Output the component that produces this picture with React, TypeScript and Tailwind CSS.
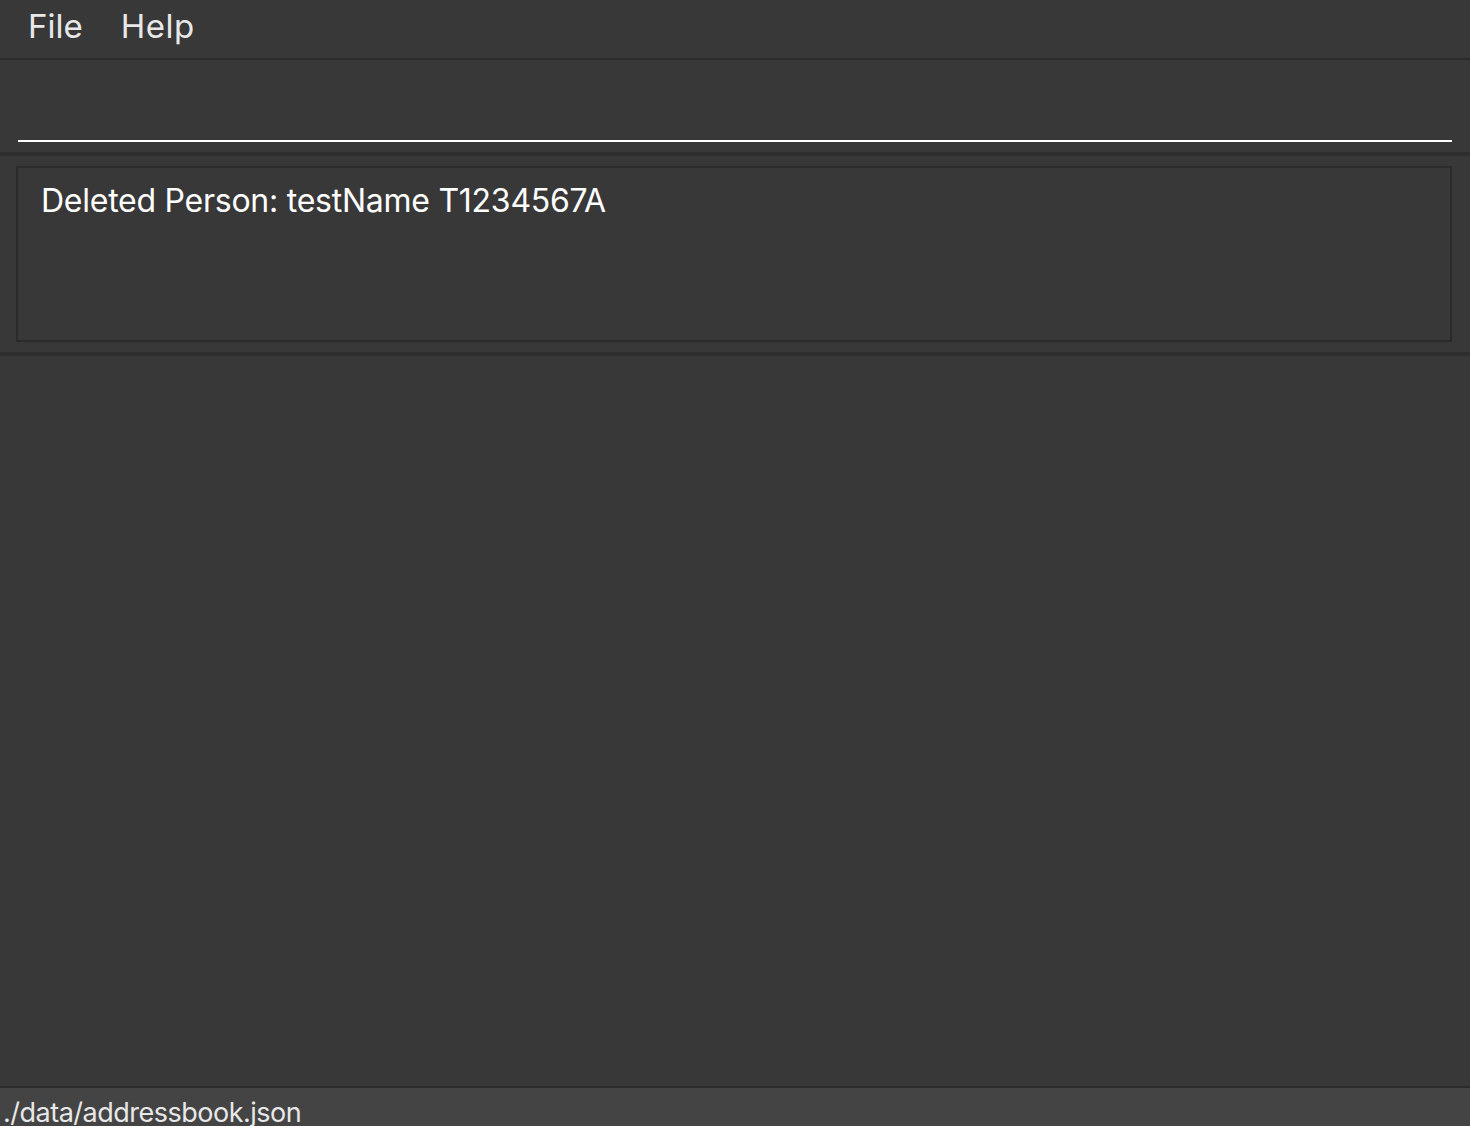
export default function App() {
    return (
        <div className="flex h-screen w-full flex-col overflow-hidden bg-[#383838] text-white" style={{ fontFamily: 'Inter, "Noto Sans", sans-serif' }}>
            {/* Menu bar */}
            <div className="flex h-[60px] shrink-0 items-center gap-[38px] border-b-2 border-[#2c2c2c] pl-[28px] text-[33px] leading-none text-[#e8e8e8]">
                <span className="-mt-[6px]">File</span>
                <span className="-mt-[6px] tracking-[0.5px]">Help</span>
            </div>

            {/* Command box */}
            <div className="h-[92px] shrink-0 px-[18px] pt-[80px]">
                <div className="h-[2px] w-full bg-white" />
            </div>
            <div className="h-[4px] shrink-0 bg-[#2e2e2e]" />

            {/* Result display */}
            <div className="h-[196px] shrink-0 px-[16px] pt-[10px]">
                <div className="h-[176px] w-[1436px] border-2 border-[#2b2b2b] px-[23px] pt-[14px] text-[32px] leading-[1.2] tracking-[-0.25px] text-white">
                    Deleted Person: testName T1234567A
                </div>
            </div>
            <div className="h-[4px] shrink-0 bg-[#2e2e2e]" />

            {/* Person list (empty) */}
            <div className="flex-1" />

            {/* Status bar */}
            <div className="h-[40px] shrink-0 overflow-hidden border-t-2 border-[#2c2c2c] bg-[#444444] pl-[3px] pt-[11px] text-[27px] leading-none tracking-[-0.5px] text-[#e8e8e8]">
                ./data/addressbook.json
            </div>
        </div>
    );
}
